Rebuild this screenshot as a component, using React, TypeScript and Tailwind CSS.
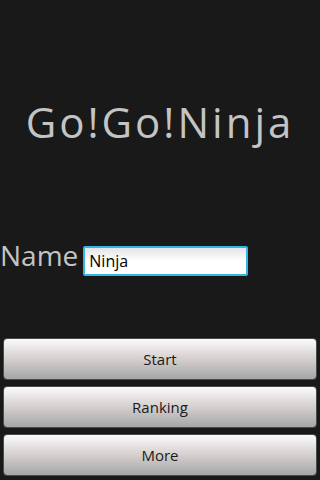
import React from 'react';

const buttons = ['Start', 'Ranking', 'More'];

const App = () => {
    return (
        <div className="w-[320px] h-[480px] bg-[#191919] flex flex-col overflow-hidden font-['Open_Sans',sans-serif]">
            {/* Title */}
            <h1 className="pt-[101px] h-[143px] text-center text-[42px] leading-[42px] tracking-[3px] font-normal text-[#c4c4c4]">
                Go!Go!Ninja
            </h1>

            {/* Name row */}
            <div className="mt-[99px] flex items-start gap-[5px]">
                <span className="text-[28px] leading-[27px] text-[#c4c4c4]">Name</span>
                <input
                    readOnly
                    value="Ninja"
                    className="mt-[4px] w-[165px] h-[30px] px-[4px] border-2 border-[#33b5e5] rounded-[2px] bg-gradient-to-b from-[#e4e4e4] via-white to-white text-[16px] text-black outline-none font-['Open_Sans',sans-serif]"
                />
            </div>

            {/* Buttons */}
            <div className="mt-auto px-[3px] pb-[4px] flex flex-col gap-[6px]">
                {buttons.map((label) => (
                    <button
                        key={label}
                        className="h-[42px] w-full rounded-[4px] border border-[#4a4a4a] bg-gradient-to-b from-[#fbfbfb] via-[#d5cfce] to-[#a6a6a6] text-[15px] text-[#1a1a1a]"
                    >
                        {label}
                    </button>
                ))}
            </div>
        </div>
    );
};

export default App;
